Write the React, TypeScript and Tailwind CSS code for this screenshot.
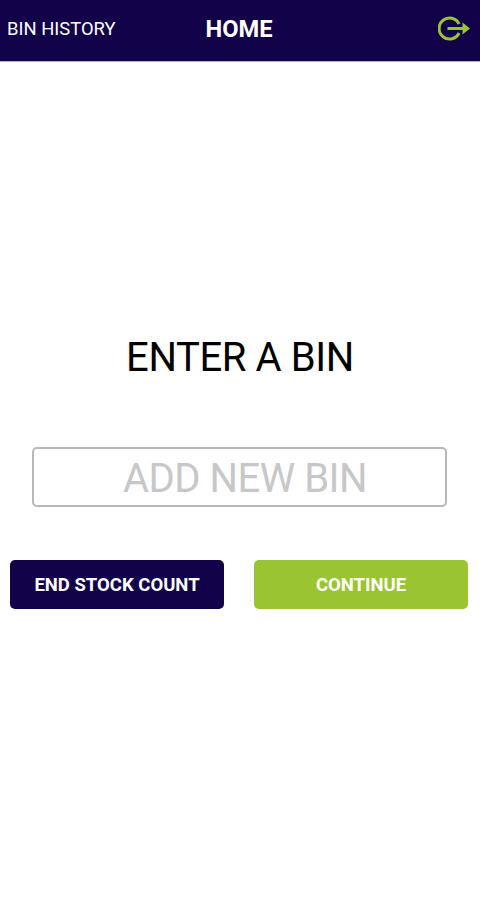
export default function App() {
  return (
    <main className="flex h-[900px] w-[480px] flex-col bg-white font-['Roboto',sans-serif]">
      <header className="grid h-[62px] shrink-0 grid-cols-[1fr_auto_1fr] items-center border-b border-[#b5b1cb] bg-[#11024a] pr-[10px] pb-[4px] pl-[7px]">
        <button className="justify-self-start text-[18.4px] text-white">BIN HISTORY</button>
        <h1 className="pt-[2px] pl-px text-[23.7px] font-bold text-white">HOME</h1>
        <button className="justify-self-end" aria-label="Log out">
          <svg width="32" height="26" viewBox="0 0 32 26" fill="none">
            <path d="M21.1 8A10.5 10.5 0 1 0 21.1 17" stroke="#9bc432" strokeWidth="3" />
            <path d="M9.5 12.5H26" stroke="#9bc432" strokeWidth="3" />
            <path d="M24.5 6.5L32 12.5L24.5 18.5Z" fill="#9bc432" />
          </svg>
        </button>
      </header>

      <section className="flex flex-col pt-[270px] pr-[12px] pl-[10px]">
        <h2 className="pt-px pl-[2px] text-center text-[40px] leading-[50px] tracking-[-0.4px] text-black">
          ENTER A BIN
        </h2>
        <input
          className="mr-[21px] ml-[22px] mt-[64px] h-[60px] rounded-[5px] border-2 border-[#b8b8b8] pt-[3px] pl-[11px] text-center text-[40px] tracking-[-0.5px] outline-none placeholder:text-[#c7c7c7]"
          placeholder="ADD NEW BIN"
        />
        <div className="mt-[53px] flex gap-[30px]">
          <button className="h-[49px] flex-1 rounded-[5px] bg-[#11024a] pt-[3px] text-[18.5px] font-bold text-white">
            END STOCK COUNT
          </button>
          <button className="h-[49px] flex-1 rounded-[5px] bg-[#9bc432] pt-[3px] text-[18.5px] font-bold text-white">
            CONTINUE
          </button>
        </div>
      </section>
    </main>
  );
}
